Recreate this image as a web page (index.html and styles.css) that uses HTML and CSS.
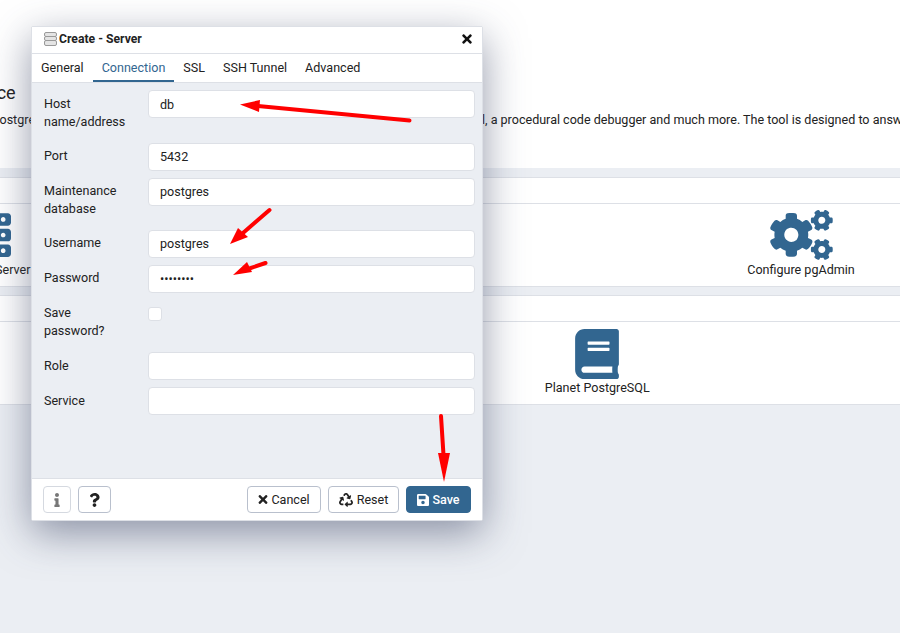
FILE: index.html
```html
<!DOCTYPE html>
<html>
<head>
<meta http-equiv="Content-Type" content="text/html; charset=utf-8" />
<title>Create - Server</title>
<link rel="stylesheet" href="styles.css">
</head>

<body>
<div class="page">
	<div class="hero">
		<h2 class="hero-title">Feature rich | Maximises PostgreSQL | Open Source</h2>
		<p class="hero-text">pgAdmin is an Open Source administration and management tool for the PostgreSQL database. It includes a graphical administration interface, the SQL query tool, a procedural code debugger and much more. The tool is designed to answer the needs of developers, DBAs and system administrators alike.</p>
	</div>

	<div class="card">
		<div class="card-head">Quick Links</div>
		<div class="card-body cols2">
			<div class="link">
				<svg class="link-icon" width="50" height="50" viewBox="0 0 512 512"><path d="M480 160H32c-17.673 0-32-14.327-32-32V64c0-17.673 14.327-32 32-32h448c17.673 0 32 14.327 32 32v64c0 17.673-14.327 32-32 32zm-48-88c-13.255 0-24 10.745-24 24s10.745 24 24 24 24-10.745 24-24-10.745-24-24-24zm-64 0c-13.255 0-24 10.745-24 24s10.745 24 24 24 24-10.745 24-24-10.745-24-24-24zm112 248H32c-17.673 0-32-14.327-32-32v-64c0-17.673 14.327-32 32-32h448c17.673 0 32 14.327 32 32v64c0 17.673-14.327 32-32 32zm-48-88c-13.255 0-24 10.745-24 24s10.745 24 24 24 24-10.745 24-24-10.745-24-24-24zm-64 0c-13.255 0-24 10.745-24 24s10.745 24 24 24 24-10.745 24-24-10.745-24-24-24zm112 248H32c-17.673 0-32-14.327-32-32v-64c0-17.673 14.327-32 32-32h448c17.673 0 32 14.327 32 32v64c0 17.673-14.327 32-32 32zm-48-88c-13.255 0-24 10.745-24 24s10.745 24 24 24 24-10.745 24-24-10.745-24-24-24zm-64 0c-13.255 0-24 10.745-24 24s10.745 24 24 24 24-10.745 24-24-10.745-24-24-24z"/></svg>
				<span>Add New Server</span>
			</div>
			<div class="link">
				<svg class="link-icon" width="63" height="50" viewBox="0 0 640 512"><path d="M512.1 191l-8.2 14.3c-3 5.3-9.4 7.5-15.1 5.4-11.8-4.4-22.6-10.7-32.1-18.6-4.6-3.8-5.8-10.5-2.8-15.7l8.2-14.3c-6.9-8-12.3-17.3-15.9-27.4h-16.5c-6 0-11.2-4.3-12.2-10.3-2-12-2.1-24.6 0-37.1 1-6 6.2-10.4 12.2-10.4h16.5c3.6-10.1 9-19.4 15.9-27.4l-8.2-14.3c-3-5.2-1.9-11.9 2.8-15.7 9.5-7.9 20.4-14.2 32.1-18.6 5.7-2.1 12.1.1 15.1 5.4l8.2 14.3c10.5-1.9 21.2-1.9 31.7 0L552 6.3c3-5.3 9.4-7.5 15.1-5.4 11.8 4.4 22.6 10.7 32.1 18.6 4.6 3.8 5.8 10.5 2.8 15.7l-8.2 14.3c6.9 8 12.3 17.3 15.9 27.4h16.5c6 0 11.2 4.3 12.2 10.3 2 12 2.1 24.6 0 37.1-1 6-6.2 10.4-12.2 10.4h-16.5c-3.6 10.1-9 19.4-15.9 27.4l8.2 14.3c3 5.2 1.9 11.9-2.8 15.7-9.5 7.9-20.4 14.2-32.1 18.6-5.7 2.1-12.1-.1-15.1-5.4l-8.2-14.3c-10.4 1.9-21.2 1.9-31.7 0zm-10.5-58.8c38.5 29.6 82.4-14.3 52.8-52.8-38.5-29.7-82.4 14.3-52.8 52.8zM386.3 286.1l33.7 16.8c10.1 5.8 14.5 18.1 10.5 29.1-8.9 24.2-26.4 46.4-42.6 65.8-7.4 8.9-20.2 11.1-30.3 5.3l-29.1-16.8c-16 13.7-34.6 24.6-54.9 31.7v33.6c0 11.6-8.3 21.6-19.7 23.6-24.6 4.2-50.4 4.4-75.9 0-11.5-2-20-11.9-20-23.6V418c-20.3-7.2-38.9-18-54.9-31.7L74 403c-10 5.8-22.9 3.6-30.3-5.3-16.2-19.4-33.3-41.6-42.2-65.7-4-10.9.4-23.2 10.5-29.1l33.3-16.8c-3.9-20.9-3.9-42.4 0-63.4L12 205.8c-10.1-5.8-14.6-18.1-10.5-29 8.9-24.2 26-46.4 42.2-65.8 7.4-8.9 20.2-11.1 30.3-5.3l29.1 16.8c16-13.7 34.6-24.6 54.9-31.7V57.1c0-11.5 8.2-21.5 19.6-23.5 24.6-4.2 50.5-4.4 76-.1 11.5 2 20 11.9 20 23.6v33.6c20.3 7.2 38.9 18 54.9 31.7l29.1-16.8c10-5.8 22.9-3.6 30.3 5.3 16.2 19.4 33.2 41.6 42.1 65.8 4 10.9.1 23.2-10 29.1l-33.7 16.8c3.9 21 3.9 42.5 0 63.5zm-117.6 21.1c59.2-77-28.7-164.9-105.7-105.7-59.2 77 28.7 164.9 105.7 105.7zm243.4 182.7l-8.2 14.3c-3 5.3-9.4 7.5-15.1 5.4-11.8-4.4-22.6-10.7-32.1-18.6-4.6-3.8-5.8-10.5-2.8-15.7l8.2-14.3c-6.9-8-12.3-17.3-15.9-27.4h-16.5c-6 0-11.2-4.3-12.2-10.3-2-12-2.1-24.6 0-37.1 1-6 6.2-10.4 12.2-10.4h16.5c3.6-10.1 9-19.4 15.9-27.4l-8.2-14.3c-3-5.2-1.9-11.9 2.8-15.7 9.5-7.9 20.4-14.2 32.1-18.6 5.7-2.1 12.1.1 15.1 5.4l8.2 14.3c10.5-1.9 21.2-1.9 31.7 0l8.2-14.3c3-5.3 9.4-7.5 15.1-5.4 11.8 4.4 22.6 10.7 32.1 18.6 4.6 3.8 5.8 10.5 2.8 15.7l-8.2 14.3c6.9 8 12.3 17.3 15.9 27.4h16.5c6 0 11.2 4.3 12.2 10.3 2 12 2.1 24.6 0 37.1-1 6-6.2 10.4-12.2 10.4h-16.5c-3.6 10.1-9 19.4-15.9 27.4l8.2 14.3c3 5.2 1.9 11.9-2.8 15.7-9.5 7.9-20.4 14.2-32.1 18.6-5.7 2.1-12.1-.1-15.1-5.4l-8.2-14.3c-10.4 1.9-21.2 1.9-31.7 0zM501.6 431c38.5 29.6 82.4-14.3 52.8-52.8-38.5-29.6-82.4 14.3-52.8 52.8z"/></svg>
				<span>Configure pgAdmin</span>
			</div>
		</div>
	</div>

	<div class="card">
		<div class="card-head">Getting Started</div>
		<div class="card-body cols4">
			<div class="link"><span>PostgreSQL Documentation</span></div>
			<div class="link"><span>pgAdmin Website</span></div>
			<div class="link">
				<svg class="link-icon" width="44" height="50" viewBox="0 0 448 512"><path d="M448 360V24c0-13.3-10.7-24-24-24H96C43 0 0 43 0 96v320c0 53 43 96 96 96h328c13.3 0 24-10.7 24-24v-16c0-7.5-3.5-14.3-8.9-18.7-4.2-15.4-4.2-59.3 0-74.7 5.4-4.3 8.9-11.1 8.9-18.6zM128 134c0-3.3 2.7-6 6-6h212c3.3 0 6 2.7 6 6v20c0 3.3-2.7 6-6 6H134c-3.3 0-6-2.7-6-6v-20zm0 64c0-3.3 2.7-6 6-6h212c3.3 0 6 2.7 6 6v20c0 3.3-2.7 6-6 6H134c-3.3 0-6-2.7-6-6v-20zm253.4 250H96c-17.7 0-32-14.3-32-32 0-17.6 14.4-32 32-32h285.4c-1.9 17.1-1.9 46.9 0 64z"/></svg>
				<span>Planet PostgreSQL</span>
			</div>
			<div class="link"><span>Community Support</span></div>
		</div>
	</div>
</div>

<!-- dialog -->
<div class="dialog">
	<div class="dlg-head">
		<svg class="dlg-icon" width="13" height="14" viewBox="0 0 13 14"><rect x="0.5" y="0.5" width="12" height="4" rx="1.5"/><rect x="0.5" y="4.5" width="12" height="4" rx="1.5"/><rect x="0.5" y="8.5" width="12" height="5" rx="1.5"/></svg>
		<span class="dlg-title">Create - Server</span>
		<svg class="dlg-close" width="10" height="14" viewBox="0 0 352 512"><path d="M242.72 256l100.07-100.07c12.28-12.28 12.28-32.19 0-44.48l-22.24-22.24c-12.28-12.28-32.19-12.28-44.48 0L176 189.28 75.93 89.21c-12.28-12.28-32.19-12.28-44.48 0L9.21 111.45c-12.28 12.28-12.28 32.19 0 44.48L109.28 256 9.21 356.07c-12.28 12.28-12.28 32.19 0 44.48l22.24 22.24c12.28 12.28 32.2 12.28 44.48 0L176 322.72l100.07 100.07c12.28 12.28 32.2 12.28 44.48 0l22.24-22.24c12.28-12.28 12.28-32.19 0-44.48L242.72 256z"/></svg>
	</div>
	<ul class="tabs">
		<li>General</li>
		<li class="on">Connection</li>
		<li>SSL</li>
		<li>SSH Tunnel</li>
		<li>Advanced</li>
	</ul>
	<div class="dlg-body">
		<div class="row"><label>Host name/address</label><input type="text" value="db" /></div>
		<div class="row"><label>Port</label><input type="text" value="5432" /></div>
		<div class="row"><label>Maintenance database</label><input type="text" value="postgres" /></div>
		<div class="row"><label>Username</label><input type="text" value="postgres" /></div>
		<div class="row"><label>Password</label><input type="password" value="postgres" /></div>
		<div class="row"><label>Save password?</label><span class="check"></span></div>
		<div class="row"><label>Role</label><input type="text" /></div>
		<div class="row"><label>Service</label><input type="text" /></div>
	</div>
	<div class="dlg-foot">
		<button class="btn btn-info"><svg width="8" height="14" viewBox="0 0 192 512"><path d="M20 424.229h20V279.771H20c-11.046 0-20-8.954-20-20V212c0-11.046 8.954-20 20-20h112c11.046 0 20 8.954 20 20v212.229h20c11.046 0 20 8.954 20 20V492c0 11.046-8.954 20-20 20H20c-11.046 0-20-8.954-20-20v-47.771c0-11.046 8.954-20 20-20zM96 0C56.235 0 24 32.235 24 72s32.235 72 72 72 72-32.235 72-72S135.764 0 96 0z"/></svg></button>
		<button class="btn btn-help"><svg width="11" height="14" viewBox="0 0 384 512"><path d="M202.021 0C122.202 0 70.503 32.703 29.914 91.026c-7.363 10.58-5.093 25.086 5.178 32.874l43.138 32.709c10.373 7.865 25.132 6.026 33.253-4.148 25.049-31.381 43.63-49.449 82.757-49.449 30.764 0 68.816 19.799 68.816 49.631 0 22.552-18.617 34.134-48.993 51.164-35.423 19.86-82.299 44.576-82.299 106.405V320c0 13.255 10.745 24 24 24h72.471c13.255 0 24-10.745 24-24v-5.773c0-42.86 125.268-44.645 125.268-160.627C377.504 66.256 286.902 0 202.021 0zM192 373.459c-38.196 0-69.271 31.075-69.271 69.271 0 38.195 31.075 69.27 69.271 69.27s69.271-31.075 69.271-69.271-31.075-69.27-69.271-69.27z"/></svg></button>
		<span class="spacer"></span>
		<button class="btn btn-cancel"><svg width="10" height="13" viewBox="0 0 352 512"><path d="M242.72 256l100.07-100.07c12.28-12.28 12.28-32.19 0-44.48l-22.24-22.24c-12.28-12.28-32.19-12.28-44.48 0L176 189.28 75.93 89.21c-12.28-12.28-32.19-12.28-44.48 0L9.21 111.45c-12.28 12.28-12.28 32.19 0 44.48L109.28 256 9.21 356.07c-12.28 12.28-12.28 32.19 0 44.48l22.24 22.24c12.28 12.28 32.2 12.28 44.48 0L176 322.72l100.07 100.07c12.28 12.28 32.2 12.28 44.48 0l22.24-22.24c12.28-12.28 12.28-32.19 0-44.48L242.72 256z"/></svg>Cancel</button>
		<button class="btn btn-reset"><svg width="14" height="14" viewBox="0 0 512 512"><path d="M184.561 261.903c3.232 13.997-12.123 24.635-24.068 17.168l-40.736-25.455-50.867 81.402C55.606 356.273 70.96 384 96.012 384H148c6.627 0 12 5.373 12 12v40c0 6.627-5.373 12-12 12H96.115c-75.334 0-121.302-83.048-81.408-146.88l50.822-81.388-40.725-25.448c-12.081-7.547-8.966-25.961 4.879-29.158l110.237-25.45c8.611-1.988 17.201 3.381 19.189 11.99l25.452 110.237zm98.561-182.915l41.289 66.076-40.74 25.457c-12.051 7.528-9 25.953 4.879 29.158l110.237 25.45c8.672 1.999 17.215-3.438 19.189-11.99l25.45-110.237c3.197-13.844-11.99-24.719-24.068-17.168l-40.687 25.424-41.263-66.082c-37.521-60.033-125.209-60.171-162.816 0l-17.963 28.766c-3.51 5.62-1.8 13.021 3.82 16.533l33.919 21.195c5.62 3.512 13.024 1.803 16.536-3.817l17.961-28.743c12.712-20.341 41.973-19.676 54.257-.022zM497.288 301.12l-27.515-44.065c-3.511-5.623-10.916-7.334-16.538-3.821l-33.861 21.159c-5.62 3.512-7.33 10.915-3.818 16.536l27.564 44.112c13.257 21.211-2.057 48.96-27.136 48.96H320V336.02c0-14.213-17.242-21.383-27.313-11.313l-80 79.981c-6.249 6.248-6.249 16.379 0 22.627l80 79.989C302.689 517.308 320 510.3 320 495.989V448h95.88c75.274 0 121.335-82.997 81.408-146.88z"/></svg>Reset</button>
		<button class="btn btn-save"><svg width="12" height="14" viewBox="0 0 448 512"><path d="M433.941 129.941l-83.882-83.882A48 48 0 0 0 316.118 32H48C21.49 32 0 53.49 0 80v352c0 26.51 21.49 48 48 48h352c26.51 0 48-21.49 48-48V163.882a48 48 0 0 0-14.059-33.941zM224 416c-35.346 0-64-28.654-64-64 0-35.346 28.654-64 64-64s64 28.654 64 64c0 35.346-28.654 64-64 64zm96-304.52V212c0 6.627-5.373 12-12 12H76c-6.627 0-12-5.373-12-12V108c0-6.627 5.373-12 12-12h228.52c3.183 0 6.235 1.264 8.485 3.515l3.48 3.48A11.996 11.996 0 0 1 320 111.48z"/></svg>Save</button>
	</div>
</div>

<!-- red arrows drawn over the shot -->
<svg class="arrows" width="900" height="633" viewBox="0 0 900 633">
	<line x1="409.5" y1="120.5" x2="258" y2="106"/>
	<polygon points="240,104.5 260,100 259,112"/>
	<line x1="269.5" y1="210" x2="243" y2="233"/>
	<polygon points="230,244 238,228 248,237"/>
	<line x1="265.5" y1="263" x2="248" y2="269"/>
	<polygon points="233,275 247,262 252,272"/>
	<line x1="441" y1="416" x2="443.5" y2="455"/>
	<polygon points="444,482 438,453 450,453"/>
</svg>
</body>
</html>
```

FILE: styles.css
```css
*{ margin:0; padding:0; box-sizing:border-box;}
html,body{ height:100%; overflow:hidden;}
body{ background:#ebeef3; color:#222; font:12.55px/18px Roboto,"Liberation Sans",sans-serif;}
li{ list-style:none;}

/* the page behind the dialog is scrolled sideways */
.page{ width:1630px; margin-left:-421.5px;}
.hero{ background:#fff; height:168px; padding:82px 7px 0;}
.hero-title{ padding-left:20px; font-size:18px; font-weight:400; line-height:22px;}
.hero-text{ margin-top:7px; white-space:nowrap;}

.card{ background:#fff; border-top:1px solid #dde0e6; border-bottom:1px solid #dde0e6; margin-bottom:8px;}
.hero + .card{ margin-top:9px;}
.card-head{ height:26px; padding:3px 16px; border-bottom:1px solid #dde0e6;}
.card-body{ display:grid; height:82px;}
.cols2{ grid-template-columns:1fr 1fr; padding-top:6px;}
.cols2 .link-icon{ margin-bottom:1px;}
.cols4{ grid-template-columns:repeat(4,1fr); padding-top:7px;}
.link{ text-align:center; line-height:18px;}
.link span{ display:block; white-space:nowrap;}
.link-icon{ display:block; margin:0 auto; fill:#326690;}

.dialog{ position:absolute; left:31px; top:26px; width:452px; height:495px; display:flex; flex-direction:column; background:#ebeef3; border:1px solid #dde0e6; border-radius:2px; box-shadow:0 12px 40px rgba(60,70,100,.55);}
.dlg-head{ display:flex; align-items:center; height:27px; padding:0 10px 2px 12px; background:#fff; border-bottom:1px solid #dde0e6; flex:none;}
.dlg-icon{ fill:#e4e4e4; stroke:#999; stroke-width:1; margin-right:2px;}
.dlg-title{ flex:1; font-weight:bold; font-size:12.2px; color:#222;}
.dlg-close{ fill:#111;}

.tabs{ display:flex; height:29px; background:#fff; border-bottom:1px solid #dde0e6; flex:none;}
.tabs li{ padding:5px 9px 0; height:28px;}
.tabs li.on{ color:#326690; border-bottom:2px solid #326690;}

.dlg-body{ flex:1; padding:7.2px 7px 0 12px;}
.row{ display:flex; margin-bottom:7px;}
.row label{ width:104px; padding:4.4px 18px 5px 0; line-height:18px; flex:none;}
.row input{ flex:1; height:28px; min-width:0; padding:0 11px; background:#fff; border:1px solid #dde0e6; border-radius:4px; color:#222; font:12.55px Roboto,"Liberation Sans",sans-serif; outline:none;}
.check{ width:14px; height:14px; margin-top:7px; background:#fff; border:1px solid #dde0e6; border-radius:3px;}

.dlg-foot{ display:flex; align-items:center; height:42px; padding:0 11px 0 11px; gap:7px; background:#fff; border-top:1px solid #dde0e6; flex:none;}
.spacer{ flex:1;}
.btn{ display:flex; align-items:center; justify-content:center; gap:3px; height:27px; background:#fff; border:1px solid #b9c0cd; border-radius:4px; color:#222; font:12.55px Roboto,"Liberation Sans",sans-serif;}
.btn svg{ fill:#222;}
.btn-info{ width:28px; border-color:#d5d9e0;}
.btn-info svg{ fill:#777;}
.btn-help{ width:33px;}
.btn-cancel{ width:74px;}
.btn-reset{ width:71px; gap:4px;}
.btn-save{ width:65px; background:#326690; border-color:#326690; color:#fff; font-weight:500;}
.btn-save svg{ fill:#fff;}

.arrows{ position:absolute; left:0; top:0; fill:#f00; stroke:none;}
.arrows line{ stroke:#f00; stroke-width:4; stroke-linecap:round;}
```
